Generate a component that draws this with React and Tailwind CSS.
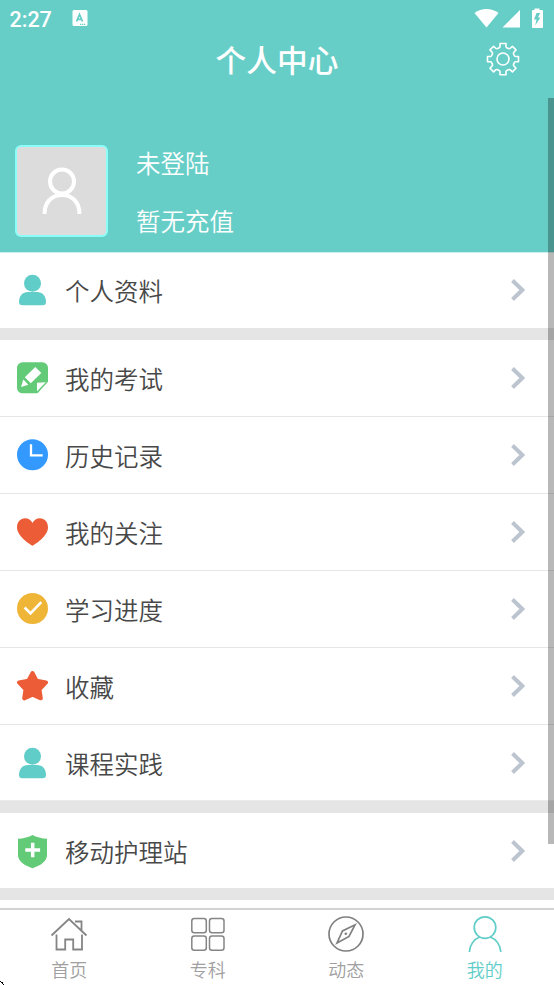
import React from 'react';

const PersonIcon = () => (
  <svg className="w-8 h-8" viewBox="0 0 32 32" fill="#61cdc8">
    <circle cx="16.500" cy="9.200" r="8.5" />
    <path d="M3 28c0-6 3.500-10 9-10h9c5.500 0 9 4 9 10 0 2-1 3.300-3.500 3.300h-20C4 31.300 3 30 3 28z" />
  </svg>
);

const ExamIcon = () => (
  <svg className="w-8 h-8" viewBox="0 0 32 32">
    <path
      d="M6.500.3h20a5.500 5.500 0 0 1 5.500 5.500v14L21.500 31.300h-15A5.500 5.500 0 0 1 1 25.800v-20A5.500 5.500 0 0 1 6.500.3z"
      fill="#63ca78"
    />
    <g fill="#fff">
      <path d="M19.300 5 25.300 11 14.800 21.300 8.800 15.300z" />
      <path d="M7.300 17.600 12.300 22.800 5 25z" />
      <path d="M21 20.700 29.800 20.200 21 29.300z" />
    </g>
  </svg>
);

const ClockIcon = () => (
  <svg className="w-8 h-8" viewBox="0 0 32 32">
    <circle cx="16.500" cy="15.700" r="15.500" fill="#3399ff" />
    <path d="M15 5.300v11h11.700" fill="none" stroke="#fff" strokeWidth="2.300" />
  </svg>
);

const HeartIcon = () => (
  <svg className="w-8 h-8" viewBox="0 0 32 32">
    <path
      d="M16.500 29.800C14 28.300 1 20.500 1 11.300 1 6 4.600 2.300 9 2.300c3.400 0 6 1.800 7.500 4.600C18 4.100 20.600 2.300 24 2.300c4.400 0 8 3.700 8 9 0 9.200-13 17-15.500 18.500z"
      fill="#ec5d37"
    />
  </svg>
);

const CheckIcon = () => (
  <svg className="w-8 h-8" viewBox="0 0 32 32">
    <circle cx="16.500" cy="15.500" r="15.500" fill="#efb536" />
    <path d="M8.600 14.500 14.500 20.400 25.300 9.200" fill="none" stroke="#fff" strokeWidth="2.600" />
  </svg>
);

const StarIcon = () => (
  <svg className="w-8 h-8" viewBox="0 0 32 32">
    <path
      d="M16.500 3 20.600 10.600 30 12.500 23.500 19.500 24.800 28.300 16.500 24.600 8.200 28.300 9.500 19.500 3 12.500 12.400 10.600z"
      fill="#ec5d37"
      stroke="#ec5d37"
      strokeWidth="4"
      strokeLinejoin="round"
    />
  </svg>
);

const ShieldIcon = () => (
  <svg className="w-8 h-8 overflow-visible" viewBox="0 0 32 32">
    <path
      d="M16.500 0C20 2 26 3.600 31 3.800V20c0 6-6 10.500-14.500 13.200C8 30.500 2 26 2 20V3.800C7 3.600 13 2 16.500 0z"
      fill="#63ca78"
    />
    <path d="M16.700 7.800v14.400M9.300 15h14.800" stroke="#fff" strokeWidth="3.500" />
  </svg>
);

const Arrow = () => (
  <svg className="w-4 h-6" viewBox="0 0 16 24">
    <path d="M2.500 2.500 12.300 12 2.500 21.500" fill="none" stroke="#bcc4cf" strokeWidth="4" />
  </svg>
);

const Row = ({ icon, label, line }) => (
  <div
    className={`flex items-center pl-4 pr-[28px] bg-white ${
      line ? 'h-[77px] border-b border-[#e6e6e6]' : 'h-[76px]'
    }`}
  >
    {icon}
    <span className="ml-[17px] mt-px flex-1 text-[24.5px] leading-9 font-[350] text-[#484848]">
      {label}
    </span>
    <Arrow />
  </div>
);

const Tab = ({ icon, label, active }) => (
  <div
    className={`flex flex-1 flex-col items-center pt-[5px] ${
      active ? 'text-[#61cdc8]' : 'text-[#a0a0a0]'
    }`}
  >
    {icon}
    <span className="mt-1 text-[18px] leading-6 font-[350]">{label}</span>
  </div>
);

const HomeIcon = () => (
  <svg className="w-[38px] h-[38px]" viewBox="0 0 38 38" fill="none" stroke="#858585" strokeWidth="1.800">
    <path d="M1.500 20.500 19 4 36.500 20.500M25 6.500h6.500v9M6.500 19.500v15h8.700v-10h8v10h8.800v-15" />
  </svg>
);

const GridIcon = () => (
  <svg className="w-[38px] h-[38px]" viewBox="0 0 38 38" fill="none" stroke="#858585" strokeWidth="1.500">
    <rect x="2.800" y="3.500" width="14.500" height="14.300" rx="2.500" />
    <rect x="20.500" y="3.500" width="14.500" height="14.300" rx="2.500" />
    <rect x="2.800" y="21" width="14.500" height="14.300" rx="2.500" />
    <rect x="20.500" y="21" width="14.500" height="14.300" rx="2.500" />
  </svg>
);

const CompassIcon = () => (
  <svg className="w-[38px] h-[38px]" viewBox="0 0 38 38" fill="none" stroke="#808080" strokeWidth="1.700">
    <circle cx="19" cy="19" r="17" />
    <path d="M28 9.800 22 21.500 10 28 15.500 16z" />
    <circle cx="18.800" cy="18.800" r="1.300" fill="#808080" stroke="none" />
  </svg>
);

const MineIcon = () => (
  <svg className="w-[38px] h-[38px]" viewBox="0 0 38 38" fill="none" stroke="#61cdc8" strokeWidth="1.700">
    <circle cx="19" cy="12.600" r="10.800" />
    <path d="M3.400 37C3.700 30 8 24 13.800 22M24.200 22C30 24 34.500 30 34.800 37" />
  </svg>
);

const GearIcon = () => (
  <svg className="w-[34px] h-[34px]" viewBox="0 0 34 34" fill="none" stroke="#fff" strokeWidth="1.600">
    <circle cx="17" cy="17" r="6" />
    <path
      d="M14 1.500h6v3.300c0 1 3.200 2.400 4 1.700l2.400-2.200 3.600 3.600-2.300 2.600c-.7.800.7 4 1.700 4h3.100v5.200h-3.100c-1 0-2.400 3.200-1.700 4l2.300 2.600-3.600 3.600-2.400-2.200c-.8-.7-4 .7-4 1.700v3.300h-6v-3.300c0-1-3.200-2.400-4-1.700l-2.400 2.200L4 26.300l2.300-2.600c.7-.8-.7-4-1.700-4H1.500v-5.200h3.100c1 0 2.400-3.200 1.700-4L4 7.900l3.600-3.600L10 6.500c.8.700 4-.7 4-1.700z"
      strokeLinejoin="round"
    />
  </svg>
);

const groups = [
  { gap: 'h-3', rows: [{ label: '个人资料', icon: <PersonIcon /> }] },
  {
    gap: '-mt-px h-[13px] border-t border-[#ececec]',
    rows: [
      { label: '我的考试', icon: <ExamIcon /> },
      { label: '历史记录', icon: <ClockIcon /> },
      { label: '我的关注', icon: <HeartIcon /> },
      { label: '学习进度', icon: <CheckIcon /> },
      { label: '收藏', icon: <StarIcon /> },
      { label: '课程实践', icon: <PersonIcon /> },
    ],
  },
  { gap: '-mt-px h-3', rows: [{ label: '移动护理站', icon: <ShieldIcon /> }] },
];

const App = () => {
  return (
    <div className="relative flex flex-col w-[554px] h-[985px] overflow-hidden bg-white font-['Noto_Sans_CJK_SC',sans-serif]">
      <header className="relative h-[252px] shrink-0 bg-[#67cec7] text-white shadow-[0_1px_0_#cdeeeb]">
        <div className="flex items-center h-9 pl-[9.5px] pr-2.5">
          <span className="mt-1 font-['Roboto',sans-serif] text-[21.5px] leading-7 font-medium">2:27</span>
          <svg className="ml-5 w-4 h-4" viewBox="0 0 16 16">
            <rect x="0.500" width="15" height="16" rx="1.500" fill="#fff" />
            <path d="M4.500 11.500 7.500 4.500 10.500 11.500M5.500 9.300h4" fill="none" stroke="#67cec7" strokeWidth="1.800" />
            <path d="M8 14.300h6" stroke="#67cec7" strokeWidth="1.200" strokeDasharray="1.300 .7" />
          </svg>
          <svg className="ml-auto w-[70px] h-5" viewBox="0 0 70 20" fill="#fff">
            <path d="M.5 5C7.500-.5 17.500-.5 24.500 5L12.500 19.500z" />
            <path d="M28.500 19.500 46 2v17.500z" />
            <path
              fillRule="evenodd"
              d="M60.500.5h5v1.500H68q1 0 1 1v16q0 1-1 1h-9q-1 0-1-1V3q0-1 1-1h1.500zM62.500 5l-2.500 6.500h2.500L61.200 17.500l5.300-8H64L66.200 5z"
            />
          </svg>
        </div>
        <div className="grid grid-cols-[1fr_auto_1fr] items-center h-[46px]">
          <h1 className="col-start-2 text-[30.7px] leading-[46px] font-medium">个人中心</h1>
          <div className="justify-self-end mr-[34px]">
            <GearIcon />
          </div>
        </div>
        <div className="flex pt-[63px] pl-[15px]">
          <div className="flex items-center justify-center w-[93px] h-[92px] rounded-md border-2 border-[#8bfdf8] bg-[#dcdcdc]">
            <svg className="w-12 h-12" viewBox="0 0 48 48" fill="none" stroke="#fff" strokeWidth="4">
              <circle cx="24" cy="14.500" r="12" />
              <path d="M6.500 47C6.500 35 14 28 24 28S41.500 35 41.500 47" />
            </svg>
          </div>
          <div className="flex flex-col ml-7 gap-[22px] text-[24.5px] leading-9 font-[350]">
            <span>未登陆</span>
            <span>暂无充值</span>
          </div>
        </div>
      </header>

      <main className="flex-1 min-h-0 overflow-hidden">
        {groups.map(({ gap, rows }, index) => (
          <div key={index}>
            {rows.map((row, i) => (
              <Row key={row.label} icon={row.icon} label={row.label} line={i < rows.length - 1} />
            ))}
            <div className={`relative bg-[#e5e5e5] ${gap}`} />
          </div>
        ))}
      </main>

      <nav className="flex h-[77px] shrink-0 border-t-2 border-[#d2d2d2] bg-white">
        <Tab icon={<HomeIcon />} label="首页" />
        <Tab icon={<GridIcon />} label="专科" />
        <Tab icon={<CompassIcon />} label="动态" />
        <Tab icon={<MineIcon />} label="我的" active />
      </nav>

      {/* scrollbar thumb */}
      <div className="absolute right-0 top-[98px] w-1.5 h-[746px] bg-black/28" />

      {/* tip of the pointer at the window edge */}
      <svg className="absolute left-0 bottom-0 w-4 h-4" viewBox="0 0 16 16" fill="#000">
        <path d="M0 12h1v1H0zM1 13h1v1H1zM2 14h1v1H2zM3 15h1v1H3zM2 13h1v1H2z" />
      </svg>
    </div>
  );
};

export default App;
